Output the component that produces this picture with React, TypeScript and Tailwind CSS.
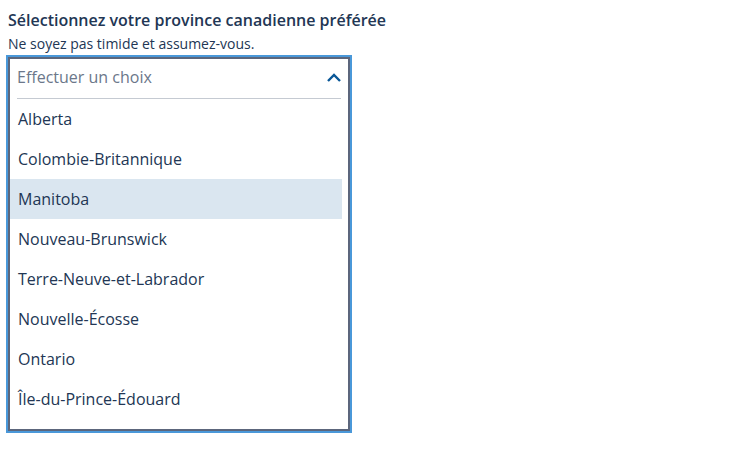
const provinces = [
  "Alberta",
  "Colombie-Britannique",
  "Manitoba",
  "Nouveau-Brunswick",
  "Terre-Neuve-et-Labrador",
  "Nouvelle-Écosse",
  "Ontario",
  "Île-du-Prince-Édouard",
];

export default function App() {
  return (
    <main className="p-2 font-['Open_Sans',sans-serif] text-[#223654]">
      <div id="province-label" className="text-base leading-6 font-semibold">
        Sélectionnez votre province canadienne préférée
      </div>
      <div id="province-hint" className="text-sm leading-6">
        Ne soyez pas timide et assumez-vous.
      </div>
      <div className="mt-px w-[342px] max-w-full border-2 border-[#5c667c] bg-white pb-2.5 outline-2 outline-[#4a98d9]">
        <div className="px-[7px]">
          <button
            type="button"
            aria-haspopup="listbox"
            aria-expanded="true"
            aria-labelledby="province-label"
            aria-describedby="province-hint"
            className="flex h-10 w-full items-center justify-between border-b border-[#c5cad2] pb-1 text-[#6b778a]"
          >
            <span>Effectuer un choix</span>
            <svg width="14" height="10" viewBox="0 0 14 10" fill="none" stroke="#095797" strokeWidth="2.4" aria-hidden="true">
              <path d="M1 9L7 3L13 9" />
            </svg>
          </button>
        </div>
        <ul role="listbox" aria-labelledby="province-label" className="mr-1.5">
          {provinces.map((p) => (
            <li
              key={p}
              role="option"
              aria-selected={p === "Manitoba"}
              className="px-2 leading-10 aria-selected:bg-[#dae6f0]"
            >
              {p}
            </li>
          ))}
        </ul>
      </div>
    </main>
  );
}
